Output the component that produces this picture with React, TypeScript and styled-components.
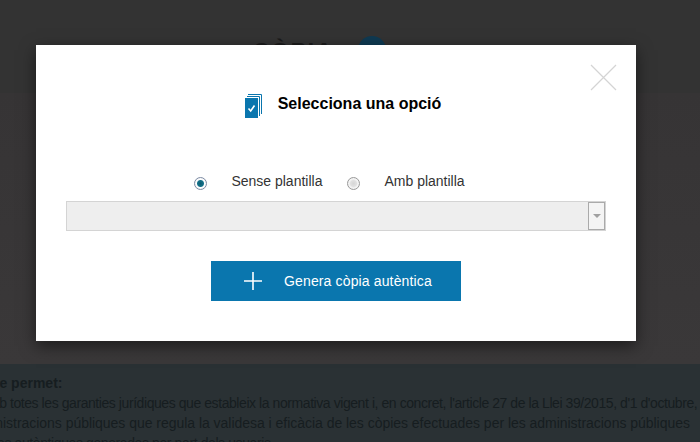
import React from "react";
import styled, { createGlobalStyle } from "styled-components";

const Global = createGlobalStyle`
  html, body {
    margin: 0;
    padding: 0;
    background: #333333;
    font-family: "Liberation Sans", Arial, sans-serif;
  }
`;

const Page = styled.div`
  position: relative;
  width: 700px;
  height: 442px;
  overflow: hidden;
  background: #333333;
  display: flex;
  flex-direction: column;
`;

const Header = styled.header`
  height: 93px;
  flex-shrink: 0;
  display: flex;
  justify-content: center;
  gap: 24px;
  padding: 36px 0 0 0;
  box-sizing: border-box;
  margin-left: -62px;
`;

const PageTitle = styled.h1`
  margin: 2px 0 0 0;
  font-size: 24px;
  line-height: 28px;
  font-weight: bold;
  color: #1b1b1b;
  letter-spacing: 1px;
`;

const HelpDot = styled.span`
  width: 28px;
  height: 28px;
  border-radius: 50%;
  background: #0f3a52;
`;

const Middle = styled.div`
  height: 271px;
  flex-shrink: 0;
  background: linear-gradient(#363435, #3a3839);
`;

const InfoPanel = styled.section`
  flex: 1;
  background: #2a3134;
  color: #161d20;
  font-size: 14px;
  line-height: 20px;
  padding: 9px 0 0 0;
  white-space: nowrap;
`;

const InfoLine = styled.div<{ $offset: number; $bold?: boolean; $spacing?: number }>`
  margin-left: ${(p) => p.$offset}px;
  font-weight: ${(p) => (p.$bold ? "bold" : "normal")};
  letter-spacing: ${(p) => p.$spacing ?? 0}px;
`;

const Modal = styled.div`
  position: absolute;
  left: 36px;
  top: 45px;
  width: 600px;
  height: 296px;
  background: #ffffff;
  box-shadow: 0 5px 15px rgba(0, 0, 0, 0.5);
  display: flex;
  flex-direction: column;
  align-items: center;
`;

const CloseButton = styled.button`
  position: absolute;
  right: 19px;
  top: 19px;
  width: 27px;
  height: 27px;
  padding: 0;
  border: 0;
  background: none;
  display: flex;
`;

const ModalHead = styled.div`
  display: flex;
  align-items: center;
  gap: 16px;
  margin-top: 48px;
  height: 26px;
  margin-left: 14px;
`;

const ModalTitle = styled.h2`
  margin: 0;
  font-size: 16px;
  font-weight: bold;
  color: #000000;
  line-height: 20px;
  position: relative;
  top: -2px;
`;

const RadioRow = styled.div`
  display: flex;
  align-items: center;
  margin-top: 51px;
  height: 22px;
  margin-left: -13px;
`;

const RadioLabel = styled.label`
  font-size: 14px;
  color: #333333;
  line-height: 20px;
  margin-left: 24px;
  margin-right: 25px;
  &:last-child {
    margin-right: 0;
  }
`;

const RadioDot = styled.span<{ $checked?: boolean }>`
  width: 13px;
  height: 13px;
  box-sizing: border-box;
  border-radius: 50%;
  border: 1px solid ${(p) => (p.$checked ? "#7d8ba3" : "#9a9a9a")};
  background: ${(p) =>
    p.$checked
      ? "radial-gradient(circle at 50% 50%, #0c5a70 0, #14728a 3px, #ffffff 4px, #e6e8ee 100%)"
      : "radial-gradient(circle at 50% 50%, #d6d6d6 0, #e0e0e0 3px, #f5f5f5 4.5px, #e4e4e4 100%)"};
  position: relative;
  top: 2px;
`;

const SelectBox = styled.div`
  width: 540px;
  height: 30px;
  margin-top: 9px;
  box-sizing: border-box;
  background: #eeeeee;
  border: 1px solid #d4d4d4;
  display: flex;
  justify-content: flex-end;
`;

const SelectArrow = styled.span`
  width: 17px;
  box-sizing: border-box;
  background: #f4f4f4;
  border: 1px solid #aaaaaa;
  display: flex;
  align-items: center;
  justify-content: center;
  &::after {
    content: "";
    border-left: 4px solid transparent;
    border-right: 4px solid transparent;
    border-top: 4px solid #a0a0a0;
  }
`;

const GenerateButton = styled.button`
  width: 250px;
  height: 40px;
  margin-top: 30px;
  border: 0;
  padding: 0 0 0 33px;
  background: #0a76ae;
  color: #ffffff;
  font-family: inherit;
  font-size: 14px;
  letter-spacing: 0.14px;
  display: flex;
  align-items: center;
  gap: 22px;
`;

const CloseIcon = () => (
  <svg width="27" height="27" viewBox="0 0 27 27" fill="none" stroke="#d4d4d4" strokeWidth="1.2">
    <path d="M1 1L26 26M26 1L1 26" />
  </svg>
);

const CopyIcon = () => (
  <svg width="17" height="24" viewBox="0 0 17 24">
    <path d="M3 0.5H16.5V20" fill="none" stroke="#0a76ae" strokeWidth="1" />
    <path d="M2 2.5H14.5V22" fill="none" stroke="#0a76ae" strokeWidth="1" />
    <rect x="0" y="4" width="13" height="20" fill="#0a76ae" />
    <path d="M3.5 14.5L5.7 17L9.5 11.5" fill="none" stroke="#ffffff" strokeWidth="1.6" />
  </svg>
);

const PlusIcon = () => (
  <svg width="18" height="18" viewBox="0 0 18 18" stroke="#ffffff" strokeWidth="1.6">
    <path d="M9 0V18M0 9H18" />
  </svg>
);

export default function App() {
  return (
    <Page>
      <Global />
      <Header>
        <PageTitle>CÒPIA</PageTitle>
        <HelpDot />
      </Header>
      <Middle />
      <InfoPanel>
        <InfoLine $offset={-20} $bold>
          Que permet:
        </InfoLine>
        <InfoLine $offset={-21} $spacing={-0.43}>
          Amb totes les garanties jurídiques que estableix la normativa vigent i, en concret, l'article 27 de la Llei 39/2015, d'1 d'octubre, del procediment
        </InfoLine>
        <InfoLine $offset={-35} $spacing={-0.03}>
          administracions públiques que regula la validesa i eficàcia de les còpies efectuades per les administracions públiques
        </InfoLine>
        <InfoLine $offset={-27} $spacing={-0.4}>
          còpies autèntiques generades per part dels usuaris.
        </InfoLine>
      </InfoPanel>
      <Modal>
        <CloseButton aria-label="Tanca">
          <CloseIcon />
        </CloseButton>
        <ModalHead>
          <CopyIcon />
          <ModalTitle>Selecciona una opció</ModalTitle>
        </ModalHead>
        <RadioRow>
          <RadioDot $checked />
          <RadioLabel>Sense plantilla</RadioLabel>
          <RadioDot />
          <RadioLabel>Amb plantilla</RadioLabel>
        </RadioRow>
        <SelectBox>
          <SelectArrow />
        </SelectBox>
        <GenerateButton>
          <PlusIcon />
          Genera còpia autèntica
        </GenerateButton>
      </Modal>
    </Page>
  );
}
